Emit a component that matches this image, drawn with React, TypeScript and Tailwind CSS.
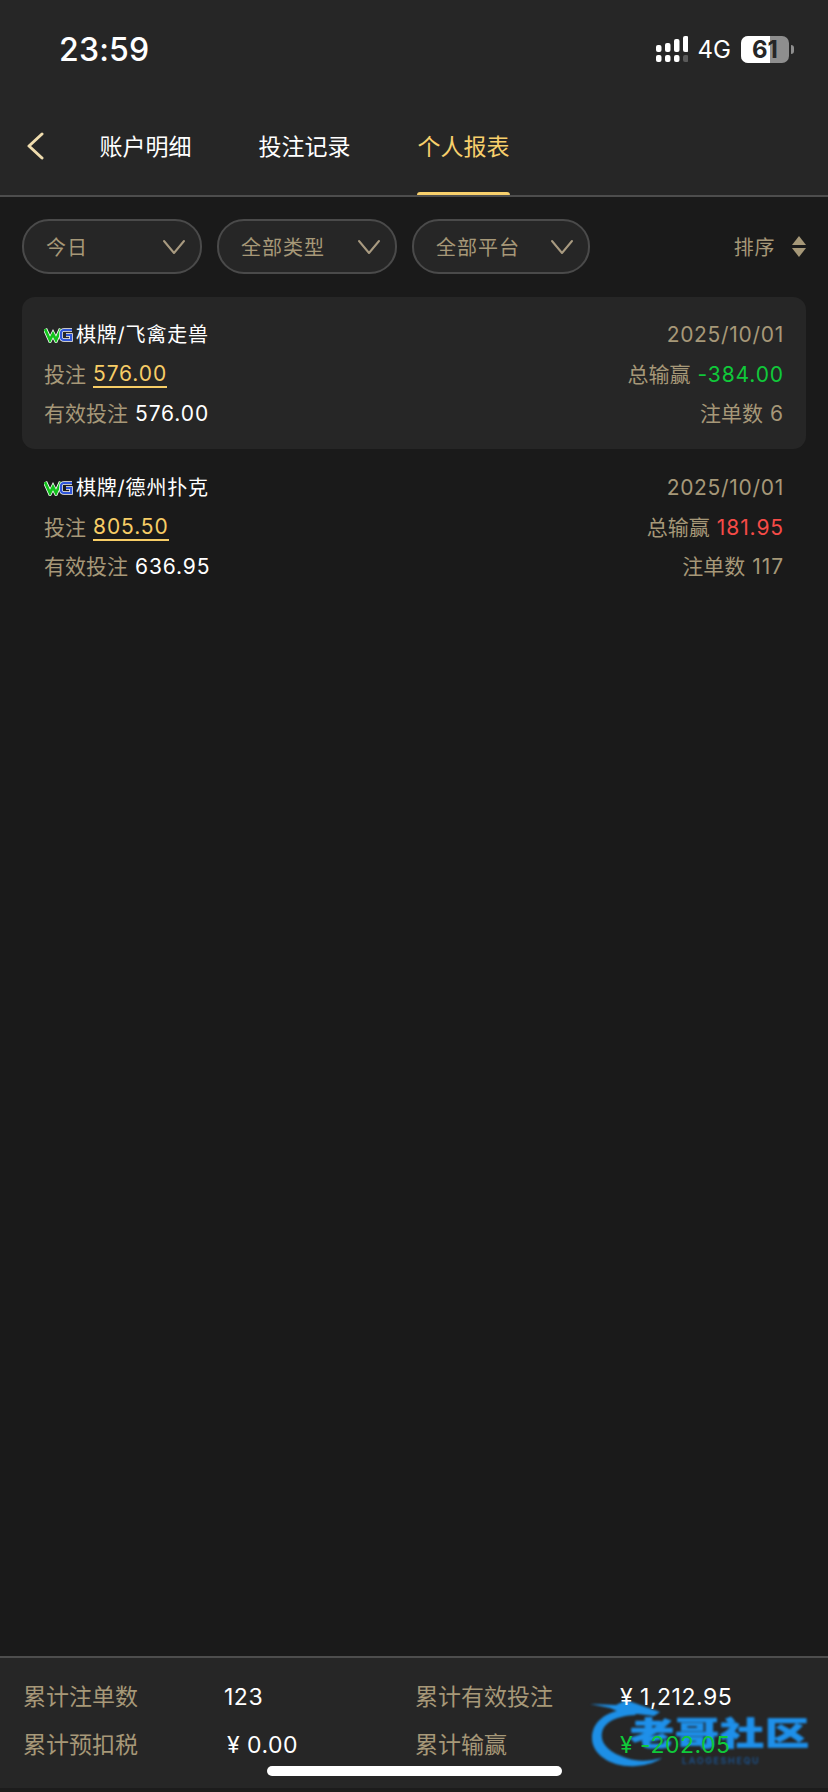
import React from 'react';

const tabs = ['账户明细', '投注记录', '个人报表'];

const filters = [
  { label: '今日', width: 'w-[180px]' },
  { label: '全部类型', width: 'w-[180px]' },
  { label: '全部平台', width: 'w-[178px]' },
];

const records = [
  { title: '棋牌/飞禽走兽', bet: '576.00', valid: '576.00', win: '-384.00', winColor: 'text-[#10c93a]', count: '6', active: true },
  { title: '棋牌/德州扑克', bet: '805.50', valid: '636.95', win: '181.95', winColor: 'text-[#f54b47]', count: '117', active: false },
];

const Signal = () => (
  <svg width="32" height="27" viewBox="0 0 32 27" className="block">
    <rect x="0" y="9" width="5.5" height="7" rx="2" fill="#fff" />
    <rect x="9" y="7" width="5.5" height="9" rx="2" fill="#fff" />
    <rect x="18" y="3" width="5.5" height="13" rx="2" fill="#fff" />
    <rect x="27" y="0" width="5.5" height="16" rx="2" fill="#fff" />
    <rect x="0" y="19" width="5.5" height="7" rx="2" fill="#fff" />
    <rect x="9" y="19" width="5.5" height="7" rx="2" fill="#fff" />
    <rect x="18" y="19" width="5.5" height="7" rx="2" fill="#fff" />
    <rect x="27" y="19" width="5.5" height="7" rx="2" fill="#5a5a5a" />
  </svg>
);

const Battery = () => (
  <div className="flex items-center gap-[2px]">
    <div className="relative flex h-[27px] w-[48px] items-center justify-center overflow-hidden rounded-[7px] bg-[#8e8e8e]">
      <div className="absolute inset-y-0 left-0 w-[29px] bg-white" />
      <span className="relative text-[24px] font-bold leading-none text-[#262626]">61</span>
    </div>
    <div className="h-[9px] w-[3px] rounded-r-full bg-[#8e8e8e]" />
  </div>
);

const Chevron = () => (
  <svg width="24" height="16" viewBox="0 0 24 16" fill="none" stroke="#a89a80" strokeWidth="2" strokeLinecap="round" strokeLinejoin="round">
    <path d="M2 2 L12 14 L22 2" />
  </svg>
);

const WgLogo = () => (
  <svg width="30" height="17" viewBox="0 0 30 17" className="mr-[2px] block shrink-0">
    <polyline points="1,3 6,14 9,8 12,14 17,3" fill="none" stroke="#fff" strokeWidth="4.4" strokeLinejoin="miter" />
    <polyline points="1,3 6,14 9,8 12,14 17,3" fill="none" stroke="#12c21c" strokeWidth="2.8" strokeLinejoin="miter" />
    <path d="M28 4 H20 Q17 4 17 7 V11 Q17 14 20 14 H27 V9 H22" fill="none" stroke="#fff" strokeWidth="3.6" />
    <path d="M28 4 H20 Q17 4 17 7 V11 Q17 14 20 14 H27 V9 H22" fill="none" stroke="#2f55d8" strokeWidth="2.2" />
  </svg>
);

const Watermark = () => (
  <div className="absolute left-[590px] top-[42px] h-[72px] w-[224px] blur-[1px]">
    <svg width="110" height="72" viewBox="0 0 110 72" fill="none" className="absolute left-0 top-0">
      <path d="M40 9 C16 10 2 22 2 38 C2 56 24 68 46 66 C58 65 66 62 72 58 C60 61 48 62 36 58 C20 53 10 44 12 33 C14 22 26 16 46 15 Z" fill="#1d8fe6" />
      <path d="M0 4 L26 5 L36 0 L50 5 L70 12 L64 16 L48 14 L34 14 L20 8 Z" fill="#1d8fe6" />
    </svg>
    <div className="absolute left-[40px] top-[18px] origin-top scale-y-[0.72] whitespace-nowrap text-[44px] font-black leading-[44px] tracking-[1px] text-[#1e90ea] [-webkit-text-stroke:1px_#1e90ea]">
      老哥社区
    </div>
    <div className="absolute left-[92px] top-[56px] whitespace-nowrap text-[9px] font-bold leading-[9px] tracking-[1.6px] text-[#1c4f86]">
      LAOGESHEQU
    </div>
  </div>
);

const labelClass = 'text-[#a69878]';
const numClass = 'tracking-[0.9px]';

export default function App() {
  return (
    <div className="flex min-h-[1792px] w-[828px] flex-col bg-[#1a1a1a] font-['Inter','Noto_Sans_CJK_SC',sans-serif] text-[21px] text-white">
      <header className="h-[197px] border-b-2 border-[#4d4d4d] bg-[#262626]">
        <div className="flex h-[100px] items-start justify-between pl-[59px] pr-[34px] pt-[30px]">
          <span className="text-[32px] font-medium leading-[40px] tracking-[0.2px]">23:59</span>
          <div className="flex items-center pt-[6px]">
            <Signal />
            <span className="ml-[10px] mr-[10px] text-[24px] leading-[27px]">4G</span>
            <Battery />
          </div>
        </div>
        <div className="flex h-[95px] items-start">
          <button className="ml-[26px] mt-[32px] w-[73px] shrink-0">
            <svg width="18" height="28" viewBox="0 0 18 28" fill="none" stroke="#efdcae" strokeWidth="3" strokeLinecap="round" strokeLinejoin="round" className="block">
              <path d="M16 2 L3 14 L16 26" />
            </svg>
          </button>
          <nav className="flex gap-[66px]">
            {tabs.map((tab, i) => (
              <div key={tab} className="relative h-[95px] w-[93px] pt-[32px] text-center">
                <span className={`text-[23px] leading-[30px] ${i === 2 ? 'text-[#f8d06c]' : 'text-white'}`}>{tab}</span>
                {i === 2 && <div className="absolute bottom-0 left-0 h-[3px] w-full rounded-t-[3px] bg-[#f8d06c]" />}
              </div>
            ))}
          </nav>
        </div>
      </header>

      <main className="flex-1 px-[22px]">
        <div className="mt-[22px] flex items-center">
          <div className="flex gap-[15px]">
            {filters.map((f) => (
              <div key={f.label} className={`flex h-[55px] items-center justify-between rounded-[27px] border-2 border-[#4a4a4a] bg-[#262626] pl-[22px] pr-[14px] ${f.width}`}>
                <span className={`pt-[2px] text-[20px] tracking-[1px] ${labelClass}`}>{f.label}</span>
                <Chevron />
              </div>
            ))}
          </div>
          <div className="ml-auto flex items-center gap-[17px]">
            <span className={`pt-[2px] text-[20px] tracking-[0.6px] ${labelClass}`}>排序</span>
            <div className="flex flex-col gap-[3px]">
              <div className="h-0 w-0 border-x-[7px] border-b-[9px] border-x-transparent border-b-[#a69878]" />
              <div className="h-0 w-0 border-x-[7px] border-t-[9px] border-x-transparent border-t-[#a69878]" />
            </div>
          </div>
        </div>

        <div className="mt-[23px] flex flex-col gap-[1px]">
          {records.map((r) => (
            <section key={r.title} className={`h-[152px] rounded-[13px] pl-[22px] pr-[22px] pt-[17px] ${r.active ? 'bg-[#262626]' : ''}`}>
              <div className="flex h-[41px] items-center justify-between">
                <div className="flex items-center">
                  <WgLogo />
                  <span className="text-[20px] tracking-[0.8px]">{r.title}</span>
                </div>
                <span className={`${labelClass} tracking-[0.7px]`}>2025/10/01</span>
              </div>
              <div className="flex h-[39px] items-center justify-between">
                <div className="flex items-center">
                  <span className={labelClass}>投注</span>
                  <span className={`ml-[7px] border-b-2 border-[#f7cd66] text-[#f7cd66] leading-[24px] ${numClass}`}>{r.bet}</span>
                </div>
                <div className="flex items-center">
                  <span className={labelClass}>总输赢</span>
                  <span className={`ml-[7px] ${numClass} ${r.winColor}`}>{r.win}</span>
                </div>
              </div>
              <div className="flex h-[39px] items-center justify-between">
                <div className="flex items-center">
                  <span className={labelClass}>有效投注</span>
                  <span className={`ml-[7px] ${numClass}`}>{r.valid}</span>
                </div>
                <div className={`flex items-center ${labelClass}`}>
                  <span>注单数</span>
                  <span className={`ml-[7px] ${numClass}`}>{r.count}</span>
                </div>
              </div>
            </section>
          ))}
        </div>
      </main>

      <footer className="relative h-[136px] border-t-2 border-b-4 border-t-[#4d4d4d] border-b-[#1c1c1c] bg-[#262626] text-[23px]">
        <Watermark />
        <div className="relative grid grid-cols-[201px_191px_205px_1fr] pl-[23px] pt-[24px]">
          <span className={`h-[48px] leading-[30px] ${labelClass}`}>累计注单数</span>
          <span className="leading-[30px] tracking-[0.5px]">123</span>
          <span className={`leading-[30px] ${labelClass}`}>累计有效投注</span>
          <span className="leading-[30px] tracking-[0.5px]">¥ 1,212.95</span>
          <span className={`leading-[30px] ${labelClass}`}>累计预扣税</span>
          <span className="pl-[3px] leading-[30px] tracking-[0.5px]">¥ 0.00</span>
          <span className={`leading-[30px] ${labelClass}`}>累计输赢</span>
          <span className="leading-[30px] tracking-[0.5px] text-[#10c93a]">¥ -202.05</span>
        </div>
        <div className="absolute left-[267px] top-[108px] h-[10px] w-[295px] rounded-full bg-white" />
      </footer>
    </div>
  );
}
